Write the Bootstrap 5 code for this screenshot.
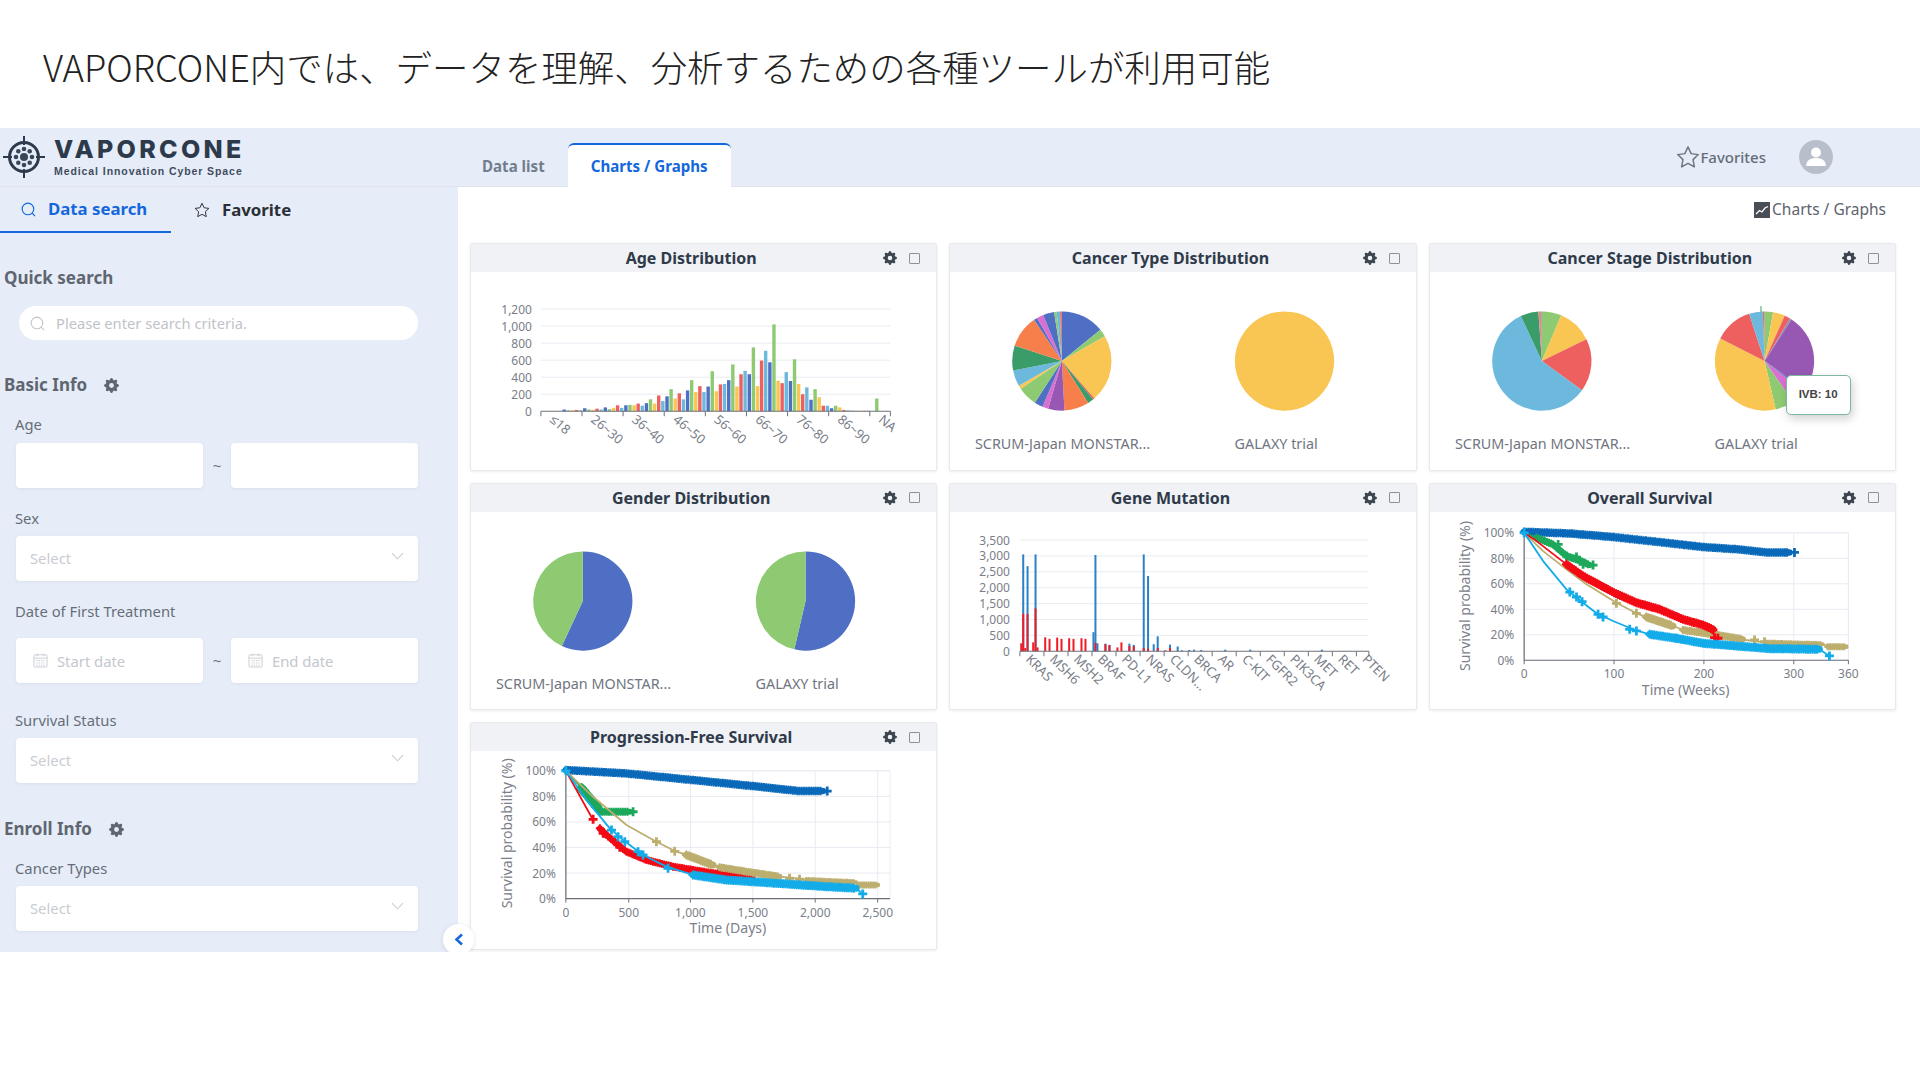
<!DOCTYPE html>
<html lang="ja">
<head>
  <meta charset="UTF-8" />
  <title>VAPORCONE Charts / Graphs</title>
  <link href="https://cdn.jsdelivr.net/npm/bootstrap@5.3.0/dist/css/bootstrap.min.css" rel="stylesheet"/>
  <style>
    body { background: #fff; font-family: "Noto Sans", "Noto Sans CJK JP", sans-serif; overflow: hidden; }
    .slide-title { height: 128px; padding: 4px 0 0 43px; font-size: 36.45px; color: #222; font-family: "Noto Sans CJK JP", sans-serif; font-weight: 300; }
    .app-head { height: 59px; background: #e6edf8; border-bottom: 1px solid #dfe4ec; }
    .brand-box { width: 458px; padding-left: 3px; }
    .brand-text { margin-left: 1px; }
    .brand-name { font-family: "Inter", sans-serif; font-weight: 800; font-size: 25px; letter-spacing: 3.3px; line-height: 24px; color: #2c3a4c; }
    .brand-sub { font-family: "Liberation Sans", sans-serif; font-weight: 700; font-size: 10.5px; letter-spacing: .92px; line-height: 14px; color: #3f4c5e; margin-top: 3px; }
    .head-tabs { border: 0; align-self: flex-end; }
    .head-tabs .nav-link { border: 0; padding: 0 23px; height: 44px; line-height: 46px; font-size: 15.1px; font-weight: 700; color: #717d8e; border-radius: 6px 6px 0 0; }
    .head-tabs .nav-link.active { background: #fff; color: #1467dc; border-top: 2px solid #1467dc; line-height: 42px; }
    .head-tabs .nav-item:first-child .nav-link { padding-left: 24px; }
    .fav-link { font-size: 15px; font-weight: 500; color: #646c78; }
    .user-pic { width: 34px; height: 34px; margin: 0 87px 0 33px; }
    .app-body { height: 765px; }
    .side-pane { width: 458px; background: #e6edf8; color: #636a75; }
    .side-tabs { height: 46px; }
    .side-tab { height: 46px; font-size: 16.8px; font-weight: 700; color: #2b2f36; padding-left: 21px; }
    .side-tab.active { width: 171px; color: #1467dc; border-bottom: 2px solid #1467dc; }
    .side-tab + .side-tab { padding-left: 23px; }
    .sect-title { font-size: 17px; font-weight: 700; line-height: 24px; height: 24px; padding-left: 4px; color: #5f6670; }
    .sect-gear { margin-left: 17px; }
    .fld-label { font-size: 14.8px; line-height: 20px; height: 20px; padding-left: 15px; color: #676e79; }
    .fld-row { padding: 0 40px 0 16px; }
    .fld-input.form-control, .fld-input.form-select { height: 45px; border: 0; border-radius: 4px; font-size: 14.8px; color: #c9ccd2; padding-left: 14px; box-shadow: 0 1px 3px rgba(120, 135, 160, .12); }
    .fld-input::placeholder { color: #c4c7cd; }
    .fld-input.form-select { background-image: url("data:image/svg+xml,%3Csvg xmlns='http://www.w3.org/2000/svg' viewBox='0 0 14 8'%3E%3Cpath d='M1 1l6 6 6-6' fill='none' stroke='%23c9ccd2' stroke-width='1.2'/%3E%3C/svg%3E"); background-size: 13px 8px; background-position: right 14px top 16px; }
    .fld-input.with-icon { padding-left: 41px; }
    .fld-icon { position: absolute; left: 17px; top: 15px; }
    .tilde { width: 28px; text-align: center; color: #70767f; font-size: 15px; line-height: 45px; }
    .quick-box { margin: 16px 40px 0 19px; }
    .quick-input.form-control { height: 34px; border: 0; border-radius: 17px; font-size: 14.7px; padding-left: 37px; }
    .quick-input::placeholder { color: #bfc3c9; }
    .quick-icon { position: absolute; left: 11px; top: 10px; }
    .gap-t8 { margin-top: 8px; }
    .gap-t9 { margin-top: 9px; }
    .gap-t17 { margin-top: 17px; }
    .gap-t20 { margin-top: 20px; }
    .gap-t27 { margin-top: 27px; }
    .gap-t33 { margin-top: 33px; }
    .gap-t34 { margin-top: 34px; }
    .main-pane { padding: 0 24px 0 12px; min-width: 0; }
    .crumb { height: 56px; padding: 11px 10px 0 0; font-size: 15.5px; color: #5d636d; gap: 2px; }
    .plot-row { --bs-gutter-x: 12px; --bs-gutter-y: 12px; }
    .plot-card { height: 227.5px; border: 1px solid #e7e9ed; border-radius: 2px; box-shadow: 0 1px 3px rgba(60, 70, 90, .1); }
    .plot-head { height: 28px; padding: 0 16px 0 0; background: #f0f2f5; border: 0; border-radius: 0 !important; }
    .plot-title { font-size: 16px; font-weight: 700; color: #2f3a4a; line-height: 28px; }
    .plot-tools { margin-left: -28px; width: 37px; }
    .tool-box { width: 11px; height: 11px; border: 1.5px solid #8d9198; border-radius: 1px; }
    .plot-card svg.plot { display: block; }
    .plot-card svg text { font-family: "Noto Sans", sans-serif; fill: #6f7480; }
    .plot-card svg text.cap { font-size: 14.4px; fill: #70757f; }
    .plot-card svg text.num { font-size: 12px; fill: #797e88; }
    .plot-card svg text.tick { font-size: 13px; fill: #797e88; }
    .plot-card svg text.axt { font-size: 14.1px; fill: #7b808a; }
    .val-tip { position: absolute; left: 356px; top: 103px; width: 65px; height: 40px; background: #fff; border: 1px solid #7db79d; border-radius: 5px; font-family: "Liberation Sans", sans-serif; font-size: 11.5px; font-weight: 700; color: #444; box-shadow: 2px 4px 10px rgba(0, 0, 0, .18); }
    .fold-btn { position: absolute; left: 443px; top: 796px; width: 31px; height: 31px; border-radius: 50%; background: #fff; box-shadow: 0 1px 4px rgba(60, 70, 90, .15); }
  </style>
</head>
<body>
  <svg width="0" height="0" class="position-absolute">
    <symbol id="i-gear" viewBox="0 0 16 16"><path fill-rule="evenodd" d="M9.405 1.05c-.413-1.4-2.397-1.4-2.81 0l-.1.34a1.464 1.464 0 0 1-2.105.872l-.31-.17c-1.283-.698-2.686.705-1.987 1.987l.169.311c.446.82.023 1.841-.872 2.105l-.34.1c-1.4.413-1.4 2.397 0 2.81l.34.1a1.464 1.464 0 0 1 .872 2.105l-.17.31c-.698 1.283.705 2.686 1.987 1.987l.311-.169a1.464 1.464 0 0 1 2.105.872l.1.34c.413 1.4 2.397 1.4 2.81 0l.1-.34a1.464 1.464 0 0 1 2.105-.872l.31.17c1.283.698 2.686-.705 1.987-1.987l-.169-.311a1.464 1.464 0 0 1 .872-2.105l.34-.1c1.4-.413 1.4-2.397 0-2.81l-.34-.1a1.464 1.464 0 0 1-.872-2.105l.17-.31c.698-1.283-.705-2.686-1.987-1.987l-.311.169a1.464 1.464 0 0 1-2.105-.872l-.1-.34zM8 10.6a2.6 2.6 0 1 1 0-5.2 2.6 2.6 0 0 1 0 5.2z"/></symbol>
    <symbol id="i-search" viewBox="0 0 16 16"><circle cx="7.4" cy="7.4" r="6.2" fill="none" stroke="currentColor" stroke-width="1.2"/><path d="M12 12l3 3" stroke="currentColor" stroke-width="1.2"/></symbol>
    <symbol id="i-star" viewBox="0 0 20 20"><path d="M10 1.6l2.6 5.6 6 .8-4.4 4.2 1.1 6.1L10 15.4l-5.3 2.9 1.1-6.1L1.4 8l6-.8z" fill="none" stroke="currentColor" stroke-width="1.2" stroke-linejoin="round"/></symbol>
    <symbol id="i-cal" viewBox="0 0 16 16"><g fill="none" stroke="#c9ccd2" stroke-width="1"><rect x="1" y="2" width="14" height="13" rx="1"/><path d="M1 5.5h14M4.5 .5v3M11.500 .5v3"/><path d="M3.500 8h9M3.500 10.500h9M3.500 13h9" stroke-dasharray="1.500 1"/></g></symbol>
  </svg>

  <div class="slide-title d-flex align-items-center">VAPORCONE内では、データを理解、分析するための各種ツールが利用可能</div>

  <div class="position-relative">
    <header class="app-head d-flex align-items-center">
      <div class="brand-box d-flex align-items-center gap-2">
        <svg width="42" height="42" viewBox="0 0 42 42">
          <g fill="none" stroke="#2c3a4c">
            <circle cx="21" cy="21" r="14.500" stroke-width="3"/>
            <path d="M21 0v9M21 33v9M0 21h9M33 21h9" stroke-width="2"/>
          </g>
          <g fill="#3a4759">
            <circle cx="21" cy="21" r="4"/>
            <circle cx="21" cy="13" r="2.300"/><circle cx="26.700" cy="15.300" r="2.300"/><circle cx="29" cy="21" r="2.300"/><circle cx="26.700" cy="26.700" r="2.300"/>
            <circle cx="21" cy="29" r="2.300"/><circle cx="15.300" cy="26.700" r="2.300"/><circle cx="13" cy="21" r="2.300"/><circle cx="15.300" cy="15.300" r="2.300"/>
          </g>
        </svg>
        <div class="brand-text">
          <div class="brand-name">VAPORCONE</div>
          <div class="brand-sub">Medical Innovation Cyber Space</div>
        </div>
      </div>
      <ul class="nav nav-tabs head-tabs">
        <li class="nav-item"><a class="nav-link" href="#">Data list</a></li>
        <li class="nav-item"><a class="nav-link active" href="#">Charts / Graphs</a></li>
      </ul>
      <div class="ms-auto d-flex align-items-center">
        <span class="fav-link d-flex align-items-center"><svg width="24" height="24" class="text-secondary"><use href="#i-star"/></svg>Favorites</span>
        <svg class="user-pic" viewBox="0 0 34 34">
          <circle cx="17" cy="17" r="17" fill="#b9bfca"/>
          <circle cx="17" cy="12.500" r="5" fill="#fff"/>
          <path d="M7 26c.6-6 4.500-8 10-8s9.400 2 10 8z" fill="#fff"/>
        </svg>
      </div>
    </header>

    <div class="app-body d-flex">
      <aside class="side-pane flex-shrink-0">
        <div class="side-tabs d-flex">
          <div class="side-tab active d-flex align-items-center gap-2"><svg width="15" height="15"><use href="#i-search"/></svg><span class="ms-1">Data search</span></div>
          <div class="side-tab d-flex align-items-center gap-2"><svg width="16" height="16"><use href="#i-star"/></svg><span class="ms-1">Favorite</span></div>
        </div>

        <div class="sect-title gap-t33">Quick search</div>
        <div class="quick-box position-relative">
          <input class="form-control quick-input" placeholder="Please enter search criteria." />
          <svg class="quick-icon" width="15" height="15" color="#c4c7cd"><use href="#i-search"/></svg>
        </div>

        <div class="sect-title gap-t33 d-flex align-items-center">Basic Info<svg class="sect-gear" width="15" height="15" fill="#5f6670"><use href="#i-gear"/></svg></div>
        <div class="fld-label gap-t17">Age</div>
        <div class="fld-row d-flex gap-t9">
          <input class="form-control fld-input" />
          <span class="tilde flex-shrink-0">~</span>
          <input class="form-control fld-input" />
        </div>
        <div class="fld-label gap-t20">Sex</div>
        <div class="fld-row gap-t8"><select class="form-select fld-input"><option>Select</option></select></div>
        <div class="fld-label gap-t20">Date of First Treatment</div>
        <div class="fld-row d-flex gap-t17">
          <div class="position-relative flex-fill"><input class="form-control fld-input with-icon" placeholder="Start date" /><svg class="fld-icon" width="15" height="15"><use href="#i-cal"/></svg></div>
          <span class="tilde flex-shrink-0">~</span>
          <div class="position-relative flex-fill"><input class="form-control fld-input with-icon" placeholder="End date" /><svg class="fld-icon" width="15" height="15"><use href="#i-cal"/></svg></div>
        </div>
        <div class="fld-label gap-t27">Survival Status</div>
        <div class="fld-row gap-t8"><select class="form-select fld-input"><option>Select</option></select></div>

        <div class="sect-title gap-t34 d-flex align-items-center">Enroll Info<svg class="sect-gear" width="15" height="15" fill="#5f6670"><use href="#i-gear"/></svg></div>
        <div class="fld-label gap-t17">Cancer Types</div>
        <div class="fld-row gap-t8"><select class="form-select fld-input"><option>Select</option></select></div>
      </aside>

      <main class="main-pane flex-fill">
        <div class="crumb d-flex justify-content-end align-items-start">
          <svg class="mt-1" width="16" height="16" viewBox="0 0 16 16"><rect width="16" height="16" fill="#4a4d55"/><path d="M2 12l3.500-3.500 2.500 1.500 3-4 3-1.500" fill="none" stroke="#fff" stroke-width="1.300"/></svg>
          <span>Charts / Graphs</span>
        </div>
        <div class="row plot-row" id="plots"></div>
      </main>
    </div>

    <button class="fold-btn btn p-0 border-0 d-flex align-items-center justify-content-center" aria-label="collapse">
      <svg width="10" height="13" viewBox="0 0 10 13"><path d="M8 1.500L2.500 6.500 8 11.500" fill="none" stroke="#1467dc" stroke-width="2.500"/></svg>
    </button>
  </div>

  <script>
    const BLUE = '#4f6fc5', GREEN = '#8dca72', YEL = '#f9c553', RED = '#ee5f5f', CYAN = '#6cb9dd',
      DGREEN = '#3a9d69', ORANGE = '#f67f4b', PURPLE = '#9658b3', PINK = '#d96fd0';

    function pie(cx, cy, r, slices) {
      let out = '', a0 = 0;
      const pt = a => [cx + r * Math.sin(a * Math.PI / 180), cy - r * Math.cos(a * Math.PI / 180)];
      slices.forEach(([a1, col]) => {
        const [x0, y0] = pt(a0), [x1, y1] = pt(a1);
        out += `<path d="M${cx} ${cy}L${x0} ${y0}A${r} ${r} 0 ${a1 - a0 > 180 ? 1 : 0} 1 ${x1} ${y1}Z" fill="${col}"/>`;
        a0 = a1;
      });
      return out;
    }
    function twoPies(a, b) {
      return pie(113, 89, 49.7, a) + pie(336, 89, 49.7, b) +
        '<text class="cap" x="26" y="177">SCRUM-Japan MONSTAR...</text><text class="cap" x="286" y="177">GALAXY trial</text>';
    }
    function yGrid(list, x0, x1, xl) {
      return list.map(([lab, y]) => `<line x1="${x0}" x2="${x1}" y1="${y}" y2="${y}" stroke="#e8ebf2"/><text class="num" x="${xl}" y="${y + 4.500}" text-anchor="end">${lab}</text>`).join('');
    }

    // Age Distribution: two groups of five bars per tick
    function ageChart() {
      const data = [[0,0,0,0,0],[20,10,10,15,10],[35,20,15,30,20],[45,25,40,70,40],[70,75,70,90,65],[95,140,90,185,120],[175,260,150,210,140],
        [245,365,225,295,225],[290,470,235,315,320],[365,550,290,435,475],[435,750,295,595,710],[575,1020,360,330,460],[355,610,320,200,280],
        [135,260,165,65,65],[35,65,45,15,10],[5,5,5,5,5],[0,150,0,0,0]];
      const cols = [BLUE, GREEN, YEL, RED, CYAN], base = 139.3, k = 17.05 / 200;
      let s = yGrid([1200,1000,800,600,400,200].map(v => [v.toLocaleString('en-US'), 139.3 - (v / 200) * 17.05]), 71, 421, 62);
      s += `<text class="num" x="62" y="143.800" text-anchor="end">0</text>`;
      data.forEach((g, i) => g.forEach((v, j) => {
        s += `<rect x="${71 + i * 20.600 + 1 + j * 4.100}" y="${base - v * k}" width="3.400" height="${v * k}" fill="${cols[j]}"/>`;
      }));
      s += `<path d="M71 139.300H421" stroke="#6e7079" stroke-width="1.200"/>`;
      ['≤18','26~30','36~40','46~50','56~60','66~70','76~80','86~90','NA'].forEach((l, i) => {
        const x = 71 + i * 41.170;
        s += `<path d="M${x} 139.300v5" stroke="#6e7079"/><text class="tick" transform="translate(${x + 8} 149) rotate(40)">${l}</text>`;
      });
      s += `<path d="M421 139.300v5" stroke="#6e7079"/>`;
      return s;
    }

    // Gene Mutation: thin blue bars with red bars in front
    function geneChart() {
      const fx = z => z / 3 - 10, base = 139.3, k = (139.3 - 28) / 3500;
      const blue = [[253,3050],[266,2680],[290,3050],[464,600],[470,3030],[476,250],[500,240],[512,200],[572,240],[585,200],[615,3050],[628,2370],[645,220],[657,470],[694,210],[717,150],[730,30],[752,40],[766,50],[788,40],[860,50],[935,50],[1150,50]];
      const red = [[247,250],[253,1180],[259,100],[266,1170],[283,280],[290,1350],[296,120],[319,440],[332,390],[355,430],[368,390],[391,410],[404,390],[428,410],[440,390],[470,260],[500,220],[512,190],[536,120],[548,280],[572,170],[585,160],[615,100],[628,80],[657,100],[680,30],[694,100]];
      let s = yGrid([3500,3000,2500,2000,1500,1000,500].map(v => [v.toLocaleString('en-US'), base - v * k]), 71, 420, 61);
      s += `<text class="num" x="61" y="143.800" text-anchor="end">0</text>`;
      blue.forEach(([z, v]) => s += `<rect x="${fx(z) - 1}" y="${base - v * k}" width="2" height="${v * k}" fill="#2b80c6"/>`);
      red.forEach(([z, v]) => s += `<rect x="${fx(z) - 1}" y="${base - v * k}" width="2" height="${v * k}" fill="#ee1c25"/>`);
      s += `<path d="M71 139.300H420.500" stroke="#6e7079" stroke-width="1.200"/>`;
      ['KRAS','MSH6','MSH2','BRAF','PD-L1','NRAS','CLDN...','BRCA','AR','C-KIT','FGFR2','PIK3CA','MET','RET','PTEN'].forEach((l, i) => {
        const x = 71 + i * 24.070;
        s += `<path d="M${x} 139.300v5" stroke="#6e7079"/><text class="tick" transform="translate(${x + 5} 148) rotate(45)">${l}</text>`;
      });
      s += `<path d="M420.500 139.300v5" stroke="#6e7079"/>`;
      return s;
    }

    // survival curves: points are read off the reference, [thin whole curve, thick censored parts, + marks]
    function kmChart(o) {
      const X = z => +(z / 3 + o.dx).toFixed(1), Y = z => +(z / 3 + o.dy).toFixed(1);
      const line = (pts, col, w) => `<polyline points="${pts.map(p => X(p[0]) + ',' + Y(p[1])).join(' ')}" fill="none" stroke="${col}" stroke-width="${w}" stroke-linejoin="round" stroke-linecap="round"/>`;
      const plus = (x, y, r, col, w) => `<path d="M${x - r} ${y}h${2 * r}M${x} ${y - r}v${2 * r}" stroke="${col}" stroke-width="${w}"/>`;
      const marks = (pts, col) => pts.map(p => plus(X(p[0]), Y(p[1]), 4.5, col, 2.8)).join('');
      // censor ticks along a thick part give it the rough edge of the original
      const rough = (pts, col, w) => {
        let out = '';
        for (let i = 1; i < pts.length; i++) {
          const [ax, ay] = pts[i - 1], [bx, by] = pts[i], n = Math.ceil(Math.hypot(bx - ax, by - ay) / 7);
          for (let j = 0; j < n; j++) out += plus(X(ax + (bx - ax) * j / n), Y(ay + (by - ay) * j / n), w / 2 + 1, col, 2);
        }
        return out;
      };
      let s = `<rect x="${X(o.x0)}" y="${Y(o.y100)}" width="${X(o.x1) - X(o.x0)}" height="${Y(o.y0) - Y(o.y100)}" fill="none" stroke="#eceef4"/>`;
      o.xt.forEach(([l, z]) => {
        s += `<line x1="${X(z)}" x2="${X(z)}" y1="${Y(o.y100)}" y2="${Y(o.y0)}" stroke="#e8ebf2"/>`;
        s += `<path d="M${X(z)} ${Y(o.y0)}v4" stroke="#6e7079"/><text class="num" x="${X(z)}" y="${Y(o.y0) + 18}" text-anchor="middle">${l}</text>`;
      });
      [0, 20, 40, 60, 80, 100].forEach(p => {
        const y = Y(o.y0 + (o.y100 - o.y0) * p / 100);
        if (p) s += `<line x1="${X(o.x0)}" x2="${X(o.x1)}" y1="${y}" y2="${y}" stroke="#e8ebf2"/>`;
        s += `<text class="num" x="${X(o.x0) - 10}" y="${y + 4.500}" text-anchor="end">${p}%</text>`;
      });
      s += `<path d="M${X(o.x0)} ${Y(o.y100)}V${Y(o.y0)}H${X(o.x1)}" fill="none" stroke="#6e7079" stroke-width="1.200"/>`;
      s += `<text class="axt" transform="translate(${X(o.ytx) + 5} ${Y(o.yty)}) rotate(-90)" text-anchor="middle">Survival probability (%)</text>`;
      s += `<text class="axt" x="${X(o.xtx)}" y="${Y(o.xty) + 6}" text-anchor="middle">${o.xlabel}</text>`;
      o.series.forEach(c => {
        if (c.pts) s += line(c.pts, c.col, c.w || 1.800);
        (c.thick || []).forEach(([pts, w]) => s += line(pts, c.col, w) + rough(pts, c.col, w));
        s += marks(c.marks || [], c.col);
      });
      return s;
    }

    const osChart = () => kmChart({
      dx: -9, dy: -31, x0: 313, x1: 1287, y100: 155, y0: 538, ytx: 135, yty: 345, xtx: 798, xty: 625, xlabel: 'Time (Weeks)',
      xt: [[0, 313], [100, 583], [200, 853], [300, 1123], [360, 1287]],
      series: [
        { col: '#0a69b9', thick: [[[[313,152],[450,157],[583,168],[720,183],[853,198],[960,205],[1042,214],[1110,214]], 6.5]], marks: [[1125,214]] },
        { col: '#1da85b', pts: [[313,155],[350,170]], thick: [[[[350,170],[400,190],[440,225],[480,238],[510,252]], 6]], marks: [[415,190],[440,225],[470,228],[490,250],[520,252]] },
        { col: '#bcae6e', pts: [[313,155],[370,210],[440,265],[500,310],[590,365],[650,397],[700,415],[760,435],[800,450],[880,460],[960,475],[1040,485],[1210,490],[1235,497],[1280,497]],
          thick: [[[[680,408],[760,435]], 7], [[[790,447],[880,460],[970,475]], 6], [[[1040,485],[1210,490]], 4], [[[1225,497],[1280,497]], 5]], marks: [[590,367],[650,397],[1005,477],[1035,482]] },
        { col: '#f20a14', pts: [[313,155],[350,180],[440,250]], thick: [[[[440,250],[490,285],[583,335],[650,365],[720,385],[790,415],[850,432],[880,445]], 7]], marks: [[880,447],[885,470],[895,472]] },
        { col: '#13ace9', pts: [[313,155],[370,240],[440,325],[490,365],[530,397],[580,420],[640,445],[690,460],[770,472],[850,487],[950,495],[1050,503],[1200,505],[1230,525]],
          thick: [[[[690,460],[770,472],[850,487],[950,495],[1050,503],[1200,505]], 7]], marks: [[313,155],[450,333],[470,348],[487,362],[535,400],[550,408],[630,445],[650,450],[770,472],[1230,525]] }
      ]
    });
    const pfsChart = () => kmChart({
      dx: -10, dy: -41, x0: 318, x1: 1292, y100: 182, y0: 566, ytx: 140, yty: 370, xtx: 805, xty: 652, xlabel: 'Time (Days)',
      xt: [['0', 318], ['500', 507], ['1,000', 692], ['1,500', 880], ['2,000', 1067], ['2,500', 1255]],
      series: [
        { col: '#0a69b9', thick: [[[[318,180],[500,190],[700,210],[880,228],[1020,243],[1090,243]], 6.5]], marks: [[1103,243]] },
        { col: '#1da85b', pts: [[318,182],[400,270]], thick: [[[[365,235],[415,295]], 9], [[[420,305],[510,305]], 6]], marks: [[520,305]] },
        { col: '#f20a14', pts: [[318,182],[350,240],[400,330]], thick: [[[[420,355],[440,375],[500,425],[560,450],[640,470],[760,490],[880,498]], 6]], marks: [[400,328],[430,370],[465,395],[480,412]] },
        { col: '#bcae6e', pts: [[318,182],[400,260],[500,345],[590,395],[650,425],[700,440],[760,465],[860,485],[960,500],[1050,510],[1190,517],[1215,525],[1255,525]],
          thick: [[[[680,435],[760,465]], 7], [[[780,472],[860,485],[960,500]], 6], [[[1040,510],[1190,517]], 4], [[[1200,525],[1255,525]], 5]], marks: [[590,395],[645,424],[990,505],[1020,508]] },
        { col: '#13ace9', pts: [[318,182],[380,270],[450,355],[490,390],[550,435],[620,470],[700,495],[800,510],[950,520],[1100,530],[1190,535],[1210,552]],
          thick: [[[[700,495],[800,510],[950,520],[1100,530],[1190,535]], 7]], marks: [[318,182],[455,360],[475,380],[495,395],[535,425],[550,435],[625,475],[1210,552]] }
      ]
    });

    const plots = [
      ['Age Distribution', ageChart()],
      ['Cancer Type Distribution', twoPies(
        [[51,BLUE],[60,GREEN],[139,YEL],[141,RED],[148,DGREEN],[177,ORANGE],[196,PURPLE],[203,PINK],[213,BLUE],[236,GREEN],[240,YEL],[259,CYAN],[288,DGREEN],[326,ORANGE],[330,BLUE],[338,PINK],[351,BLUE],[354,GREEN],[358,CYAN],[360,RED]],
        [[359.990,YEL]])],
      ['Cancer Stage Distribution', twoPies(
        [[23,GREEN],[64,YEL],[126,RED],[335,CYAN],[356,DGREEN],[359.500,'#e58b7c'],[360,BLUE]],
        [[10,GREEN],[24,YEL],[31,RED],[33,'#8c8fb0'],[125,PURPLE],[128,BLUE],[145,PINK],[167,GREEN],[297,YEL],[342,RED],[358,CYAN],[360,'#c9786f']]) +
        '<path d="M332.500 34v6" stroke="#3a9d69"/>', '<div class="val-tip d-flex align-items-center justify-content-center">IVB: 10</div>'],
      ['Gender Distribution', twoPies([[205,BLUE],[360,GREEN]], [[193,BLUE],[360,GREEN]])],
      ['Gene Mutation', geneChart()],
      ['Overall Survival', osChart()],
      ['Progression-Free Survival', pfsChart()]
    ];
    document.getElementById('plots').innerHTML = plots.map(([title, body, extra]) => `
      <div class="col-4">
        <div class="card plot-card">
          <div class="card-header plot-head d-flex align-items-center">
            <div class="plot-title flex-fill text-center">${title}</div>
            <div class="plot-tools d-flex align-items-center justify-content-between">
              <svg width="14" height="14" fill="#3c4450"><use href="#i-gear"/></svg>
              <span class="tool-box"></span>
            </div>
          </div>
          <div class="position-relative">
            <svg class="plot" width="100%" height="197" viewBox="1 0 466 197">${body}</svg>
            ${extra || ''}
          </div>
        </div>
      </div>`).join('');
  </script>
  <script src="https://cdn.jsdelivr.net/npm/bootstrap@5.3.0/dist/js/bootstrap.bundle.min.js"></script>
</body>
</html>
